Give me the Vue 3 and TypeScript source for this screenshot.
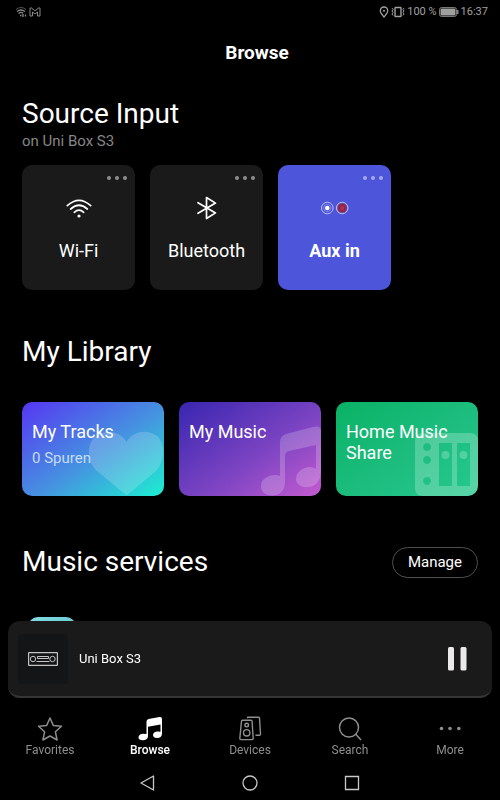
<script setup lang="ts">
import { ref } from 'vue'

type SourceId = 'wifi' | 'bluetooth' | 'aux'
type TabId = 'favorites' | 'browse' | 'devices' | 'search' | 'more'

const sources: { id: SourceId; label: string }[] = [
  { id: 'wifi', label: 'Wi-Fi' },
  { id: 'bluetooth', label: 'Bluetooth' },
  { id: 'aux', label: 'Aux in' },
]

const library: { id: string; title: string; note?: string }[] = [
  { id: 'tracks', title: 'My Tracks', note: '0 Spuren' },
  { id: 'music', title: 'My Music' },
  { id: 'share', title: 'Home Music Share' },
]

const tabs: { id: TabId; label: string }[] = [
  { id: 'favorites', label: 'Favorites' },
  { id: 'browse', label: 'Browse' },
  { id: 'devices', label: 'Devices' },
  { id: 'search', label: 'Search' },
  { id: 'more', label: 'More' },
]

const activeSource = ref<SourceId>('aux')
const activeTab = ref<TabId>('browse')
</script>

<template>
  <div class="screen">
    <div class="status">
      <svg class="status-icon" width="12" height="12" viewBox="0 0 12 12" fill="none" stroke="#8a8a8a">
        <path d="M1 3.500Q6 -.5 11 3.500" stroke="#555" />
        <path d="M2 5.500Q6 2.500 10 5.500M3.500 7.500Q6 5.500 8 7.200" stroke-width="1.300" />
        <path d="M5 9.500h1.500M8 8v3M10.500 8.500v2" stroke-width="1.300" />
      </svg>
      <svg class="status-icon" width="12" height="12" viewBox="0 0 12 12" fill="none" stroke="#8a8a8a">
        <path d="M1 2v8h2.500V6L6 8l2.500-2v4H11V2H9.500L6 4.800 2.500 2z" />
      </svg>
      <span class="grow"></span>
      <svg class="status-icon" width="10" height="12" viewBox="0 0 10 12" fill="none" stroke="#a0a0a0" stroke-width="1.300">
        <path d="M5 11C3 8.500 1.300 6.700 1.300 4.700a3.700 3.700 0 0 1 7.400 0C8.700 6.700 7 8.500 5 11z" />
        <circle cx="5" cy="4.700" r="1" fill="#a0a0a0" stroke="none" />
      </svg>
      <svg class="status-icon" width="14" height="12" viewBox="0 0 14 12" fill="none" stroke="#a0a0a0">
        <rect x="4" y="1.500" width="6" height="9" rx=".5" stroke-width="1.400" />
        <path d="M1 2l1 1.500-1 1.500 1 1.500-1 1.500 1 1.500M13 2l-1 1.500 1 1.500-1 1.500 1 1.500-1 1.500" />
      </svg>
      <span>100 %</span>
      <svg class="status-icon" width="20" height="10" viewBox="0 0 20 10">
        <rect x=".5" y=".5" width="17" height="9" rx="2" fill="none" stroke="#777" />
        <rect x="1.500" y="1.500" width="15" height="7" rx="1" fill="#a0a0a0" />
        <rect x="18" y="3" width="1.500" height="4" fill="#888" />
      </svg>
      <span class="clock">16:37</span>
    </div>

    <header class="title-bar"><h1>Browse</h1></header>

    <main>
      <section class="source-section">
        <h2>Source Input</h2>
        <p class="device-note">on Uni Box S3</p>
        <div class="sources">
          <button
            v-for="s in sources"
            :key="s.id"
            type="button"
            class="source"
            :class="{ active: s.id === activeSource }"
            @click="activeSource = s.id"
          >
            <span class="dots"><i></i><i></i><i></i></span>
            <svg v-if="s.id === 'wifi'" width="28" height="28" viewBox="0 0 28 28" fill="none" stroke="#fff" stroke-width="1.700" stroke-linecap="round">
              <path d="M2.300 11.600Q14 1 25.700 11.600M5.700 15Q14 7.500 22.300 15M9.300 18.300Q14 14 18.700 18.300" />
              <circle cx="14" cy="22" r="1.600" fill="#fff" stroke="none" />
            </svg>
            <svg v-else-if="s.id === 'bluetooth'" width="28" height="28" viewBox="0 0 28 28" fill="none" stroke="#fff" stroke-width="1.700" stroke-linejoin="round" stroke-linecap="round">
              <path d="M5 8.700L22.500 18.900 13.500 24.500V3.500L22.500 9.100 5 19.300" />
            </svg>
            <svg v-else width="28" height="28" viewBox="0 0 28 28" fill="none">
              <circle cx="6.300" cy="14" r="5.800" stroke="#b9bdf4" />
              <circle cx="6.300" cy="14" r="3.700" stroke="#868ce9" stroke-width=".8" />
              <circle cx="6.300" cy="14" r="2.300" fill="#fff" />
              <circle cx="21.200" cy="14" r="5.800" fill="#6f63b8" stroke="#b9bdf4" />
              <circle cx="21.200" cy="14" r="4.500" fill="#8f2349" />
              <circle cx="21.200" cy="14" r="1.500" stroke="#b64a6b" stroke-width=".8" />
            </svg>
            <span class="source-label">{{ s.label }}</span>
          </button>
        </div>
      </section>

      <section class="library-section">
        <h2>My Library</h2>
        <div class="library">
          <a v-for="item in library" :key="item.id" href="#" class="tile" :class="item.id">
            <svg v-if="item.id === 'tracks'" class="art" width="76" height="66" viewBox="0 0 76 66">
              <path d="M38.500 65.500L9 41C-1 32-1 16 5 9 13-1 31-1 38.500 12 46-1 63-1 71 8 77 16 77 31 68 41z" fill="#fff" fill-opacity=".18" />
            </svg>
            <svg v-else-if="item.id === 'music'" class="art" width="62" height="70" viewBox="0 0 62 70">
              <path d="M21 16Q21 10 27 8L54 1Q62-1 62 5V44C62 55 57 60 50 61 42 62 37 58 37 53 37 46 44 41 51 41Q54 41 57 43V19L30 25Q26 26 26 30V57C26 65 20 69.500 13 69.500 6 69.500 2 66 2 60 2 53 9 49 16 49Q19 49 21 50z" fill="#fff" fill-opacity=".2" />
            </svg>
            <svg v-else class="art" width="63" height="63" viewBox="0 0 63 63">
              <path fill-rule="evenodd" d="M8 0H55Q63 0 63 8V55Q63 63 55 63H8Q0 63 0 55V8Q0 0 8 0zM24 10V53H37V10zM42 10V53H55V10zM12 10a4 4 0 1 0 .1 0zM12 23a4 4 0 1 0 .1 0zM12 44a4 4 0 1 0 .1 0z" fill="#fff" fill-opacity=".23" />
              <circle cx="30.500" cy="22" r="4" fill="#fff" fill-opacity=".23" />
              <circle cx="48.500" cy="22" r="4" fill="#fff" fill-opacity=".23" />
            </svg>
            <span class="tile-title">{{ item.title }}</span>
            <span v-if="item.note" class="tile-note">{{ item.note }}</span>
          </a>
        </div>
      </section>

      <section class="services-section">
        <div class="services-head">
          <h2>Music services</h2>
          <button type="button" class="manage">Manage</button>
        </div>
        <div class="service-tile"></div>
      </section>
    </main>

    <footer class="dock">
      <div class="player">
        <div class="cover">
          <svg width="30" height="14" viewBox="0 0 30 14" fill="none" stroke="#c4c4c4">
            <rect x=".6" y=".6" width="28.800" height="12.800" rx=".5" stroke-width="1.200" />
            <circle cx="5" cy="7" r="2.700" />
            <circle cx="24.500" cy="7" r="2.700" />
            <path d="M9.500 4.500h11v2h-11zM8.500 9.500h13" />
          </svg>
        </div>
        <span class="player-name">Uni Box S3</span>
        <button type="button" class="pause" aria-label="Pause">
          <svg width="20" height="24" viewBox="0 0 20 24" fill="#ebe9e9">
            <rect x="1" y="0" width="6" height="23.500" rx="1.500" />
            <rect x="13.500" y="0" width="6" height="23.500" rx="1.500" />
          </svg>
        </button>
      </div>

      <nav class="tabs">
        <button
          v-for="t in tabs"
          :key="t.id"
          type="button"
          class="tab"
          :class="{ active: t.id === activeTab }"
          @click="activeTab = t.id"
        >
          <svg v-if="t.id === 'favorites'" width="26" height="26" viewBox="0 0 26 26" fill="none" stroke="currentColor" stroke-width="1.500" stroke-linejoin="round">
            <path d="M13 2l3.300 7.400 8.200.9-6.100 5.500 1.700 8.200L13 20l-7.100 4 1.700-8.200-6.100-5.500 8.200-.9z" />
          </svg>
          <svg v-else-if="t.id === 'browse'" width="26" height="26" viewBox="0 0 26 26" fill="currentColor">
            <path d="M9.500 5.500Q9.500 3.500 11.500 3L22.500 1Q25 .6 25 3V17.500C25 20.500 23 22 20 22 17.500 22 16 20.700 16 19 16 16.700 18 15.500 20.300 15.500L23.500 15.800V8.500L11 10.700V20C11 23 8.500 24.300 5.500 24.300 3 24.300 1.500 23.200 1.500 21.500 1.500 19.200 3.500 17.800 6 17.800L9.500 18z" />
          </svg>
          <svg v-else-if="t.id === 'devices'" width="26" height="26" viewBox="0 0 26 26" fill="none" stroke="currentColor" stroke-width="1.400" stroke-linejoin="round">
            <path d="M4.500 5.300Q4.600 4.300 5.500 4.300H14Q15 4.300 15.100 5.300L16.200 22.500Q16.200 23.600 15.200 23.600H3.800Q2.800 23.600 2.800 22.500zM10.500 2.200V1.300H21.500Q22.500 1.300 22.500 2.300L23.500 18.300Q23.500 19.300 22.500 19.300H18.500" />
            <circle cx="9.700" cy="9" r="1.800" />
            <circle cx="9.700" cy="16.800" r="3.200" />
          </svg>
          <svg v-else-if="t.id === 'search'" width="26" height="26" viewBox="0 0 26 26" fill="none" stroke="currentColor" stroke-width="1.500">
            <circle cx="12" cy="11.500" r="9.500" />
            <path d="M18.500 18L24 24" />
          </svg>
          <svg v-else width="26" height="26" viewBox="0 0 26 26" fill="currentColor">
            <circle cx="4.500" cy="12.500" r="1.800" />
            <circle cx="13" cy="12.500" r="1.800" />
            <circle cx="21.800" cy="12.500" r="1.800" />
          </svg>
          <span>{{ t.label }}</span>
        </button>
      </nav>

      <div class="system-nav">
        <button type="button" aria-label="Back">
          <svg width="16" height="16" viewBox="0 0 16 16" fill="none" stroke="#c8c8c8" stroke-width="1.300" stroke-linejoin="round"><path d="M13.500 1v14L1 8z" /></svg>
        </button>
        <button type="button" aria-label="Home">
          <svg width="16" height="16" viewBox="0 0 16 16" fill="none" stroke="#c8c8c8" stroke-width="1.300"><circle cx="8" cy="8" r="7" /></svg>
        </button>
        <button type="button" aria-label="Recent apps">
          <svg width="16" height="16" viewBox="0 0 16 16" fill="none" stroke="#c8c8c8" stroke-width="1.300"><path d="M1.500 1.500h13v13h-13z" /></svg>
        </button>
      </div>
    </footer>
  </div>
</template>

<style>
body {
  background: #000;
}
</style>

<style scoped>
.screen {
  min-height: 100vh;
  box-sizing: border-box;
  background: #000;
  color: #fff;
  font-family: Roboto, 'Liberation Sans', sans-serif;
}
h1,
h2,
p {
  margin: 0;
  font-weight: 400;
}
svg {
  display: block;
  flex: none;
}
button {
  font-family: inherit;
  color: inherit;
  background: none;
  border: 0;
  padding: 0;
  cursor: pointer;
}
.status {
  display: flex;
  align-items: center;
  height: 24px;
  padding: 0 12px 0 15px;
  gap: 2px;
  color: #a0a0a0;
  font-size: 11px;
  line-height: 24px;
}
.grow {
  flex: 1;
}
.title-bar {
  display: flex;
  justify-content: center;
  align-items: center;
  height: 58px;
  padding-left: 14px;
}
h1 {
  font-size: 19px;
  line-height: 24px;
  font-weight: 700;
}
main {
  padding: 14px 22px 0;
}
h2 {
  font-size: 28px;
  line-height: 36px;
}
.device-note {
  font-size: 15px;
  line-height: 18px;
  color: #868686;
}
.sources {
  display: flex;
  gap: 15px;
  margin-top: 15px;
}
.source {
  position: relative;
  display: flex;
  flex-direction: column;
  align-items: center;
  width: 113px;
  height: 125px;
  padding-top: 29px;
  border-radius: 10px;
  background: #1a1a1a;
}
.source.active {
  background: #4d55da;
}
.dots {
  position: absolute;
  top: 11px;
  right: 8px;
  display: flex;
  gap: 4px;
}
.dots i {
  width: 4px;
  height: 4px;
  border-radius: 50%;
  background: #8e8e8e;
}
.active .dots i {
  background: #a4a9f0;
}
.source-label {
  margin-top: 17px;
  font-size: 18px;
  line-height: 24px;
}
.active .source-label {
  font-weight: 700;
}
.library-section {
  margin-top: 44px;
}
.library {
  display: grid;
  grid-template-columns: repeat(3, 1fr);
  gap: 15px;
  margin-top: 32px;
}
.tile {
  position: relative;
  display: flex;
  flex-direction: column;
  min-height: 94px;
  box-sizing: border-box;
  padding: 19px 10px 0;
  border-radius: 10px;
  overflow: hidden;
  color: #fff;
  text-decoration: none;
}
.tracks {
  background: linear-gradient(145deg, #5636f2, #4594e0 55%, #1df0d0);
}
.music {
  background: linear-gradient(145deg, #3826b0, #7a43c2 55%, #c45bd0);
}
.share {
  background: linear-gradient(145deg, #09b265, #1dbd7f 55%, #25c98e);
}
.art {
  position: absolute;
  right: 0;
  bottom: 0;
}
.tile-title,
.tile-note {
  position: relative;
}
.tile-title {
  font-size: 18px;
  line-height: 21px;
}
.tile-note {
  margin-top: 7px;
  font-size: 15px;
  line-height: 18px;
  color: #c4dcf8;
}
.services-section {
  margin-top: 48px;
}
.services-head {
  display: flex;
  justify-content: space-between;
  align-items: center;
}
.manage {
  height: 31px;
  padding: 0 15px;
  border: 1px solid #505050;
  border-radius: 16px;
  font-size: 15px;
}
.service-tile {
  width: 48px;
  height: 48px;
  margin: 37px 0 0 6px;
  border-radius: 10px;
  background: linear-gradient(135deg, #83dde0, #58bfcc);
}
.dock {
  position: fixed;
  left: 0;
  right: 0;
  bottom: 0;
}
.player {
  display: flex;
  align-items: center;
  height: 75px;
  margin: 0 8px;
  padding: 0 25px 0 10px;
  border-bottom: 2px solid #363636;
  border-radius: 12px;
  background: #1a1a1a;
}
.cover {
  display: flex;
  align-items: center;
  justify-content: center;
  width: 50px;
  height: 50px;
  border-radius: 4px;
  background: #141516;
}
.player-name {
  flex: 1;
  margin-left: 11px;
  font-size: 13px;
}
.tabs {
  display: grid;
  grid-template-columns: repeat(5, 1fr);
  height: 69px;
  background: #000;
}
.tab {
  display: flex;
  flex-direction: column;
  align-items: center;
  padding-top: 18px;
  color: #8e8e8e;
  font-size: 12px;
  line-height: 16px;
}
.tab.active {
  color: #fff;
  font-weight: 500;
}
.system-nav {
  display: flex;
  justify-content: center;
  gap: 86px;
  padding: 8px 0 9px;
  background: #000;
}
</style>
